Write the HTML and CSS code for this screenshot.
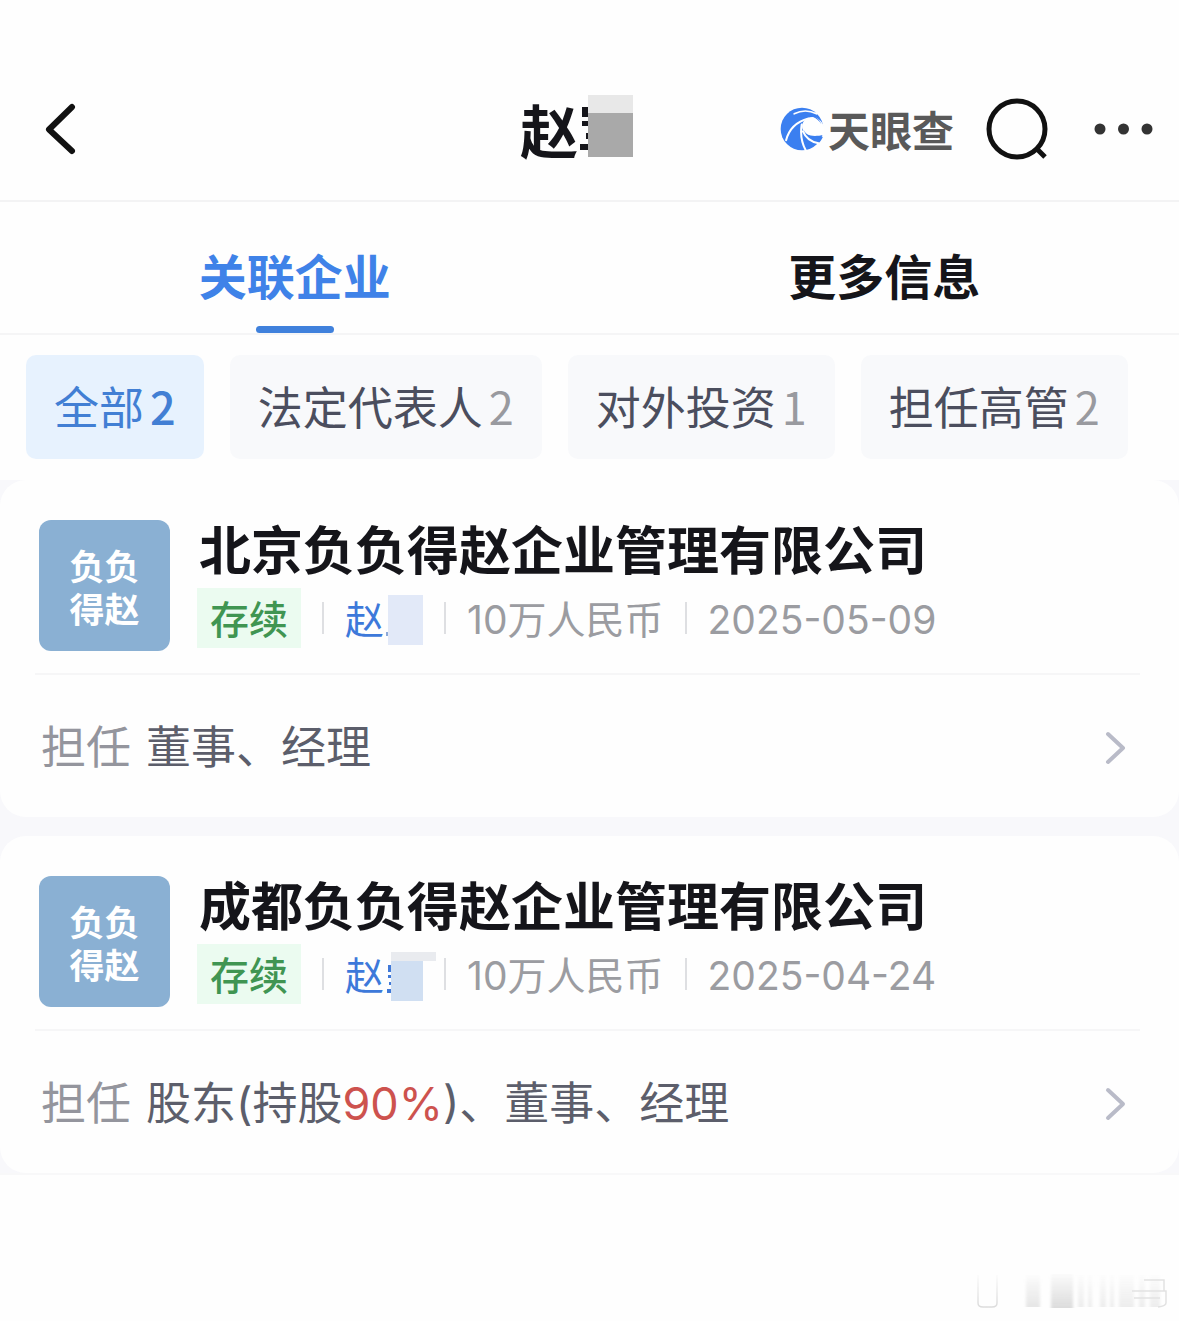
FILE: index.html
```html
<!DOCTYPE html>
<html lang="zh-CN">
<head>
<meta charset="utf-8">
<meta name="viewport" content="width=device-width, initial-scale=1">
<title>关联企业 - 天眼查</title>
<link rel="stylesheet" href="styles.css">
</head>
<body>
<header class="topbar">
  <button class="icon-button back" type="button" aria-label="返回">
    <svg width="32" height="52" viewBox="0 0 32 52" fill="none" stroke="#111" stroke-width="6" stroke-linecap="round" stroke-linejoin="round"><path d="M28 4 5 26.500 28 48"/></svg>
  </button>
  <h1 class="person">赵<svg class="mask" width="55" height="62" viewBox="0 0 55 62" aria-hidden="true"><path fill="#15151a" d="M4 12h6v10H4zM4 26h6v5H4zM8 38h3v6H8zM2 49h8v6H2z"/><path fill="#e8e8e8" d="M10 0h45v19H10z"/><path fill="#a9a9a9" d="M10 18h45v44H10z"/></svg></h1>
  <div class="actions">
    <a class="brand" href="#">
      <svg width="44" height="44" viewBox="0 0 130 130" aria-hidden="true">
        <circle cx="65" cy="65" r="63" fill="#3b7ff0"/>
        <path fill="#fff" d="M130 58C120 32 98 24 80 34 66 42 62 56 68 68c8 16 28 22 62 14z"/>
        <path fill="#3b7ff0" d="M122 50c-6-16-20-26-38-25 12 2 20 6 26 12 6 5 9 9 12 13zM70 68c10 18 28 28 57 20-4 9-8 14-13 19C92 104 76 92 70 68z"/>
        <g fill="none" stroke="#fff" stroke-linecap="round"><path stroke-width="5" d="M108 20C86 9 62 10 42 20"/><path stroke-width="6" d="M18 98C26 68 46 44 84 34M64 52c-4 26 0 54 12 76M68 72c8 20 22 31 46 35"/></g>
      </svg>
      <span>天眼查</span>
    </a>
    <button class="icon-button" type="button" aria-label="搜索">
      <svg width="62" height="62" viewBox="0 0 62 62" fill="none" stroke="#111" stroke-width="5"><circle cx="31" cy="31" r="28"/><path d="m50 50 9 9"/></svg>
    </button>
    <button class="icon-button more" type="button" aria-label="更多">
      <svg width="59" height="12" viewBox="0 0 59 12" fill="#333"><circle cx="6" cy="6" r="5.500"/><circle cx="29.500" cy="6" r="5.500"/><circle cx="53" cy="6" r="5.500"/></svg>
    </button>
  </div>
</header>

<nav class="tabs">
  <a class="tab tab-active" href="#related" aria-current="page">关联企业</a>
  <a class="tab" href="#more">更多信息</a>
</nav>

<div class="filters">
  <button class="chip chip-active" type="button">全部<span class="count">2</span></button>
  <button class="chip" type="button">法定代表人<span class="count">2</span></button>
  <button class="chip" type="button">对外投资<span class="count">1</span></button>
  <button class="chip" type="button">担任高管<span class="count">2</span></button>
</div>

<main class="companies" id="related">
  <article class="card">
    <div class="summary">
      <div class="badge">负负<br>得赵</div>
      <div class="details">
        <h2 class="name">北京负负得赵企业管理有限公司</h2>
        <div class="meta">
          <span class="status">存续</span>
          <a class="owner" href="#">赵<svg class="mask" width="39" height="50" viewBox="0 0 39 50" aria-hidden="true"><path fill="#8da9d8" d="M2 37h2v4H2z"/><path fill="#e2e9f8" d="M4 0h35v50H4z"/></svg></a>
          <span class="fact">10万人民币</span>
          <time class="fact" datetime="2025-05-09">2025-05-09</time>
        </div>
      </div>
    </div>
    <a class="role" href="#">
      <span class="role-label">担任</span>
      <span class="role-text">董事、经理</span>
      <svg class="arrow" width="21" height="34" viewBox="0 0 21 34" aria-hidden="true"><path d="m3 3 15 14L3 31"/></svg>
    </a>
  </article>

  <article class="card">
    <div class="summary">
      <div class="badge">负负<br>得赵</div>
      <div class="details">
        <h2 class="name">成都负负得赵企业管理有限公司</h2>
        <div class="meta">
          <span class="status">存续</span>
          <a class="owner" href="#">赵<svg class="mask" width="39" height="50" viewBox="0 0 39 50" aria-hidden="true"><path fill="#4079d8" d="M4 14h3v7H4zM4 24h3v3H4zM5 31h2v3H5zM3 38h4v4H3z"/><path fill="#d0dff2" d="M7 8h32v42H7z"/><path fill="#e9ebef" d="M7 1h45v9H7z"/></svg></a>
          <span class="fact">10万人民币</span>
          <time class="fact" datetime="2025-04-24">2025-04-24</time>
        </div>
      </div>
    </div>
    <a class="role" href="#">
      <span class="role-label">担任</span>
      <span class="role-text">股东(持股<em class="share">90%</em>)、董事、经理</span>
      <svg class="arrow" width="21" height="34" viewBox="0 0 21 34" aria-hidden="true"><path d="m3 3 15 14L3 31"/></svg>
    </a>
  </article>
</main>

<footer class="footer">
  <svg width="195" height="40" viewBox="0 0 195 40" aria-hidden="true">
    <defs>
      <linearGradient id="fade" x1="0" y1="0" x2="0" y2="1"><stop offset="0" stop-color="#dcdcdc" stop-opacity="0.100"/><stop offset="1" stop-color="#dcdcdc"/></linearGradient>
      <filter id="soft"><feGaussianBlur stdDeviation="1.500 0.500"/></filter>
    </defs>
    <g filter="url(#soft)">
      <path fill="url(#fade)" opacity=".7" d="M52 1h14v32H52z"/>
      <path fill="url(#fade)" d="M77 0h22v34H77z"/>
      <path fill="url(#fade)" opacity=".5" d="M104 1h6v32h-6zM114 1h4v32h-4zM126 1h6v32h-6zM136 1h4v32h-4zM145 1h15v32h-15zM165 1h6v32h-6zM176 1h10v32h-10z"/>
    </g>
    <path d="M4 1v28q0 4 5 4h9q5 0 5-4V1" fill="none" stroke="url(#fade)" stroke-width="1.500"/>
    <path d="M170 6h20v11h-32m15 0h19v12q0 3-8 4M160 24h26" fill="none" stroke="#e2e2e2" stroke-width="1.500"/>
  </svg>
</footer>
</body>
</html>
```

FILE: styles.css
```css
* {
  box-sizing: border-box;
}

body {
  margin: 0;
  background: #fefefe;
  color: #15151a;
  font-family: "Noto Sans CJK SC", sans-serif;
}

a {
  color: inherit;
  text-decoration: none;
}

svg {
  display: block;
}

h1,
h2 {
  margin: 0;
}

button {
  border: 0;
  padding: 0;
  background: none;
  font: inherit;
  cursor: pointer;
}

/* Title bar */
.topbar {
  display: grid;
  grid-template-columns: 1fr auto 1fr;
  align-items: center;
  height: 202px;
  padding: 58px 26px 0 0;
  border-bottom: 2px solid #f3f3f4;
}

.back {
  justify-self: start;
  padding-left: 44px;
}

.person {
  display: flex;
  align-items: center;
  font-size: 58px;
  line-height: 72px;
}

.person .mask {
  margin-bottom: 6px;
}

.actions {
  display: flex;
  align-items: center;
  justify-content: flex-end;
}

.brand {
  display: flex;
  align-items: center;
  gap: 4px;
  margin-right: 32px;
  color: #595959;
  font-size: 42px;
  font-weight: 700;
  line-height: 48px;
  white-space: nowrap;
}

.more {
  margin-left: 46px;
}

/* Tabs */
.tabs {
  display: grid;
  grid-template-columns: 1fr 1fr;
  border-bottom: 2px solid #f5f5f6;
}

.tab {
  display: flex;
  flex-direction: column;
  align-items: center;
  padding-top: 38px;
  font-size: 48px;
  font-weight: 700;
  line-height: 68px;
}

.tab::after {
  width: 78px;
  height: 7px;
  margin-top: 18px;
  border-radius: 4px;
  content: "";
}

.tab-active {
  color: #3f82e8;
}

.tab-active::after {
  background: #4081dc;
}

/* Filter chips */
.filters {
  display: flex;
  gap: 26px;
  padding: 20px 26px 21px;
  overflow: hidden;
}

.chip {
  display: flex;
  flex: none;
  align-items: center;
  gap: 6px;
  height: 104px;
  padding: 0 28px 4px;
  border-radius: 10px;
  background: #f8f9fb;
  color: #4b4e5e;
  font-size: 45px;
}

.count {
  color: #999a9f;
}

.chip-active {
  background: #e7f2fe;
  color: #427fd4;
}

.chip-active .count {
  color: inherit;
  font-weight: 500;
}

/* Company cards */
.companies {
  display: grid;
  gap: 19px;
  border-bottom: 2px solid #f8f8f9;
  background: #f8f8fb;
}

.card {
  border-radius: 26px;
  background: #fefefe;
}

.summary {
  display: flex;
  gap: 27px;
  margin: 0 39px 0 35px;
  padding: 40px 0 22px 4px;
  border-bottom: 2px solid #f6f6f7;
}

.badge {
  display: grid;
  flex: none;
  place-content: center;
  width: 131px;
  height: 131px;
  border-radius: 12px;
  background: #8ab0d3;
  color: #fff;
  font-size: 35px;
  font-weight: 700;
  line-height: 43px;
}

.name {
  padding-left: 2px;
  font-size: 52px;
  line-height: 56px;
  white-space: nowrap;
}

.meta {
  display: flex;
  align-items: center;
  height: 60px;
  margin-top: 12px;
  color: #9b9ca1;
  font-family: Inter, "Noto Sans CJK SC", sans-serif;
  font-size: 39px;
  line-height: 60px;
  white-space: nowrap;
}

.status {
  height: 60px;
  padding: 2px 13px 0;
  background: #ebfbf0;
  color: #409552;
  font-weight: 500;
}

.owner,
.fact {
  display: flex;
  align-items: center;
  padding-top: 4px;
}

.owner::before,
.fact::before {
  width: 2px;
  height: 32px;
  margin: 0 21px 4px;
  background: #dedfe2;
  content: "";
}

.owner {
  color: #3d79da;
}

.mask {
  overflow: visible;
}

.role {
  display: flex;
  align-items: center;
  gap: 15px;
  padding: 39px 53px 35px 41px;
  color: #5c5e6b;
  font-family: Inter, "Noto Sans CJK SC", sans-serif;
  font-size: 45px;
  line-height: 68px;
}

.role-label {
  color: #94959d;
}

.share {
  color: #cd524e;
  font-style: normal;
}

.arrow {
  margin-left: auto;
  fill: none;
  stroke: #b9bbc8;
  stroke-width: 4;
  stroke-linecap: round;
  stroke-linejoin: round;
}

.footer {
  display: flex;
  justify-content: flex-end;
  padding: 99px 10px 7px;
}
```
